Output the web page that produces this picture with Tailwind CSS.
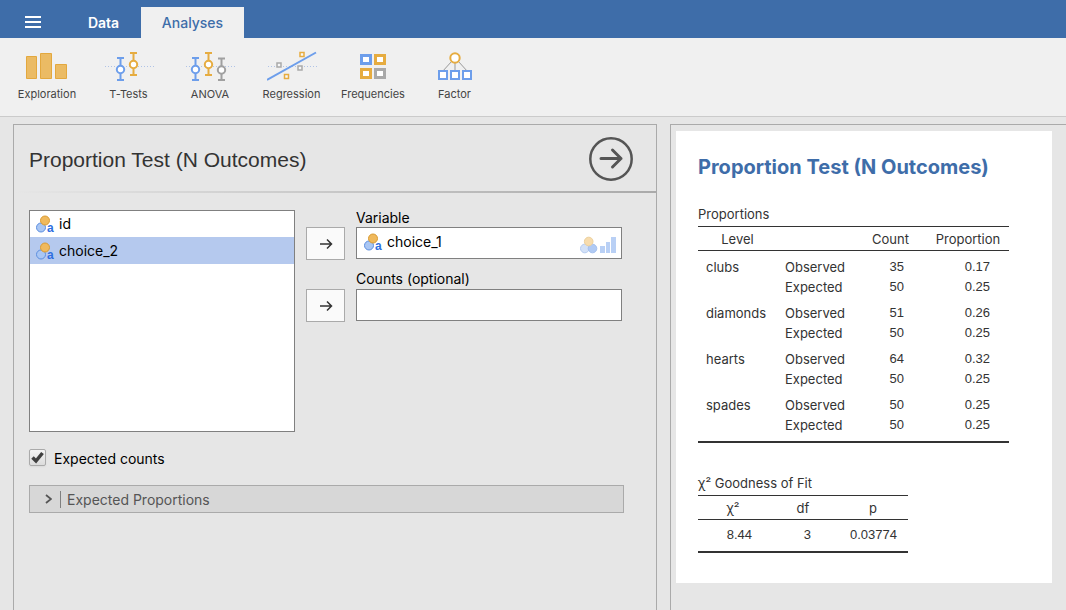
<!DOCTYPE html>
<html lang="en">
<head>
<meta charset="utf-8">
<meta name="viewport" content="width=device-width, initial-scale=1">
<title>Proportion Test (N Outcomes)</title>
<script src="https://cdn.jsdelivr.net/npm/@tailwindcss/browser@4"></script>
</head>
<body class="flex min-h-screen flex-col bg-[#e6e6e6] font-['Inter','Liberation_Sans',sans-serif] text-sm text-black">

<svg class="hidden" aria-hidden="true">
  <symbol id="nominal-text" viewBox="0 0 20 18">
    <circle cx="6" cy="12.500" r="4.500" fill="#a9c6f3" stroke="#5d8fe0"/>
    <circle cx="10" cy="5.500" r="4.500" fill="#f0b95c" stroke="#d99b33"/>
    <text x="12" y="17" font-family="Liberation Sans, sans-serif" font-size="12" font-weight="700" fill="#2f6fe0">a</text>
  </symbol>
  <symbol id="arrow" viewBox="0 0 14 12">
    <path d="M1 6h11.500M8 1.500 12.500 6 8 10.500" fill="none" stroke="#333" stroke-width="1.500"/>
  </symbol>
</svg>

<header class="flex h-[38px] items-end bg-[#3e6da9]">
  <button type="button" aria-label="Menu" class="flex h-full w-[66px] items-center justify-center pt-1.5">
    <svg class="h-3 w-4" viewBox="0 0 16 12"><path d="M0 1h16M0 6h16M0 11h16" stroke="#fff" stroke-width="2"/></svg>
  </button>
  <nav class="flex h-[31px]">
    <button type="button" class="w-[75px] font-semibold text-white">Data</button>
    <button type="button" class="w-[103px] bg-[#f0f0f0] font-medium text-[#3e6da9]">Analyses</button>
  </nav>
</header>

<div class="flex h-[79px] border-b border-[#cbcbcb] bg-[#f0f0f0] px-1.5 text-[11px] text-[#444]">
  <button type="button" class="flex w-[82px] flex-col items-center gap-[3px] pt-2.5">
    <svg class="h-9 w-[50px]" viewBox="0 0 50 36"><g fill="#ebbb64" stroke="#e3a83e"><path d="M4.500 8.500h10v22h-10zM18.500 5.500h11v25h-11zM33.500 16.500h11v14h-11z"/></g></svg>
    <span>Exploration</span>
  </button>
  <button type="button" class="flex w-[81px] flex-col items-center gap-[3px] pt-2.5">
    <svg class="h-9 w-[50px]" viewBox="0 0 50 36" fill="none" stroke-width="2"><path d="M1 18.500h49" stroke="#b0c3e6" stroke-width="1" stroke-dasharray="1 2"/><path d="M13 10h7M16.500 10v22M13 32h7" stroke="#6d9eeb"/><circle cx="16.500" cy="21.500" r="3.700" fill="#fff" stroke="#6d9eeb"/><path d="M26 5h7M29.500 5v22M26 27h7" stroke="#e6ac40"/><circle cx="29.500" cy="16.500" r="3.700" fill="#fff" stroke="#e6ac40"/></svg>
    <span>T-Tests</span>
  </button>
  <button type="button" class="flex w-[82px] flex-col items-center gap-[3px] pt-2.5">
    <svg class="h-9 w-[50px]" viewBox="0 0 50 36" fill="none" stroke-width="2"><path d="M1 18.500h49" stroke="#b0c3e6" stroke-width="1" stroke-dasharray="1 2"/><path d="M7 10h7M10.500 10v22M7 32h7" stroke="#6d9eeb"/><circle cx="10.500" cy="21.500" r="3.700" fill="#fff" stroke="#6d9eeb"/><path d="M20 5h7M23.500 5v22M20 27h7" stroke="#e6ac40"/><circle cx="23.500" cy="16.500" r="3.700" fill="#fff" stroke="#e6ac40"/><path d="M33 10.500h7M36.500 10v22M33 32h7" stroke="#a0a0a0"/><circle cx="36.500" cy="22" r="3.700" fill="#fff" stroke="#a0a0a0"/></svg>
    <span>ANOVA</span>
  </button>
  <button type="button" class="flex w-[81px] flex-col items-center gap-[3px] pt-2.5">
    <svg class="h-9 w-[50px]" viewBox="0 0 50 36" fill="none" stroke-width="1.500"><path d="M1 18.500h49" stroke="#b0c3e6" stroke-width="1" stroke-dasharray="1 2"/><path d="M0 32 49 4.500" stroke="#6d9eeb" stroke-width="2"/><g fill="#f7f7f7"><path d="M33 4.500h4v4h-4zM17.500 26.500h4v4h-4z" stroke="#e6ac40"/><path d="M10 15h4v4h-4zM31 18h4v4h-4z" stroke="#a9a9a9"/></g></svg>
    <span>Regression</span>
  </button>
  <button type="button" class="flex w-[82px] flex-col items-center gap-[3px] pt-2.5">
    <svg class="h-9 w-[50px]" viewBox="0 0 50 36" fill="#fff" stroke-width="3"><path d="M13.500 7.500h9v8h-9z" stroke="#6d9eeb"/><path d="M27.500 7.500h9v8h-9zM13.500 21.500h9v8h-9z" stroke="#e6ac40"/><path d="M27.500 21.500h9v8h-9z" stroke="#a9a9a9"/></svg>
    <span>Frequencies</span>
  </button>
  <button type="button" class="flex w-[81px] flex-col items-center gap-[3px] pt-2.5">
    <svg class="h-9 w-[50px]" viewBox="0 0 50 36" fill="#fff" stroke-width="2"><path d="M25 12v12M22 13 12 24M28 13l10 11" stroke="#999" stroke-width="1"/><circle cx="25" cy="10" r="4.700" stroke="#e6ac40"/><path d="M9 23h8v8h-8zM21 23h8v8h-8zM33 23h8v8h-8z" stroke="#6d9eeb"/></svg>
    <span>Factor</span>
  </button>
</div>

<main class="grid flex-1 grid-cols-[644fr_396fr] gap-[13px] pl-[13px] pt-[7px]">

  <section class="border border-b-0 border-[#aaa]">
    <div class="flex h-[66px] items-center justify-between pl-[15px] pr-[23px] pt-0.5">
      <h1 class="pt-0.5 font-['Liberation_Sans',Arial,sans-serif] text-[21px] text-[#333]">Proportion Test (N Outcomes)</h1>
      <button type="button" aria-label="Hide options">
        <svg class="h-11 w-11" viewBox="0 0 44 44" fill="none" stroke="#555"><circle cx="22" cy="22" r="20.700" stroke-width="2.500"/><path d="M12 21.500h20M23.500 13l8.500 8.500-8.500 8.500" stroke-width="3" stroke-linecap="round" stroke-linejoin="round"/></svg>
      </button>
    </div>
    <div class="h-0.5 bg-linear-to-r from-[#e6e6e6] to-[#aaa]"></div>

    <div class="pl-[15px] pr-8 pt-[17px]">
      <div class="grid grid-cols-[1fr_39px_1fr] gap-[11px] pr-0.5">
        <ul class="h-[222px] border border-[#808080] bg-white">
          <li class="flex h-[26px] items-center gap-1 pl-[5px]"><svg class="h-[18px] w-5"><use href="#nominal-text"/></svg>id</li>
          <li class="flex h-[27px] items-center gap-1 bg-[#b5c9ee] pl-[5px]"><svg class="h-[18px] w-5"><use href="#nominal-text"/></svg>choice_2</li>
        </ul>
        <div class="flex flex-col gap-[29px] pt-[17px]">
          <button type="button" aria-label="Move to Variable" class="flex h-[33px] items-center justify-center border border-[#aaa] bg-[#fafafa]"><svg class="h-3 w-3.5"><use href="#arrow"/></svg></button>
          <button type="button" aria-label="Move to Counts" class="flex h-[33px] items-center justify-center border border-[#aaa] bg-[#fafafa]"><svg class="h-3 w-3.5"><use href="#arrow"/></svg></button>
        </div>
        <div>
          <h2 class="h-[17px] leading-4">Variable</h2>
          <div class="flex h-8 items-center gap-1 border border-[#808080] bg-white pl-1.5 pr-[5px]">
            <svg class="mb-0.5 h-[18px] w-5"><use href="#nominal-text"/></svg>
            <span class="mb-0.5 flex-1">choice_1</span>
            <svg class="mt-1 h-[18px] w-9" viewBox="0 0 36 18"><circle cx="4.800" cy="12.500" r="4.300" fill="#d3e1f7" stroke="#b5cbf0"/><circle cx="12.500" cy="12.500" r="4.300" fill="#b0caf4" stroke="#a4c0ee"/><circle cx="8.700" cy="5.500" r="4.300" fill="#f7dcae" stroke="#ecd09c"/><path d="M20 10h5v7h-5zM26 6h4v11h-4zM31 1h5v16h-5z" fill="#b9d0f5"/></svg>
          </div>
          <label for="counts" class="block h-[30px] pt-3 leading-4">Counts (optional)</label>
          <input id="counts" type="text" class="block h-8 w-full border border-[#808080] bg-white px-2">
        </div>
      </div>

      <label class="mt-4 flex h-[19px] items-center gap-2">
        <span class="relative flex h-[17px] w-[17px]">
          <input type="checkbox" checked class="peer h-full w-full appearance-none rounded-xs border border-[#aaa] bg-linear-to-b from-[#f4f4f4] to-[#dcdcdc] shadow-xs">
          <svg class="pointer-events-none absolute inset-0 hidden peer-checked:block" viewBox="0 0 17 17"><path d="M3.500 8.500 7 12 13.500 4" fill="none" stroke="#404040" stroke-width="3.500"/></svg>
        </span>
        <span class="pt-0.5">Expected counts</span>
      </label>

      <button type="button" class="mt-[18px] flex h-7 w-full items-center border border-[#aaa] bg-[#d7d7d7] pl-[15px] text-[#555]">
        <svg class="h-2.5 w-[7px]" viewBox="0 0 7 10"><path d="M1 1l5 4-5 4" fill="none" stroke="#555" stroke-width="1.800"/></svg>
        <span class="ml-2 h-[17px] border-l border-[#808080] pl-1.5 leading-[18px]">Expected Proportions</span>
      </button>
    </div>
  </section>

  <section class="border border-b-0 border-r-0 border-[#aaa] pl-[5px] pr-3.5 pt-1.5">
    <article class="bg-white pb-[30px] pl-[22px] text-[13px] text-[#333]">
      <h2 class="pt-[22px] text-xl font-bold leading-7 text-[#3e6da9]">Proportion Test (N Outcomes)</h2>

      <table class="mt-[23px] w-[311px] table-fixed border-collapse border-b-2 border-[#333]">
        <caption class="h-[22px] text-left leading-5">Proportions</caption>
        <colgroup><col class="w-[79px]"><col class="w-[77px]"><col class="w-[73px]"><col class="w-[82px]"></colgroup>
        <thead><tr class="h-6 border-y border-[#333] *:p-0 *:font-normal *:leading-5"><th scope="col">Level</th><td></td><th scope="col">Count</th><th scope="col">Proportion</th></tr></thead>
        <tbody class="*:h-5 *:*:leading-5 *:odd:*:h-[26px] *:odd:*:pt-1.5 *:first:*:h-7 *:first:*:pt-2 *:last:*:h-[26px] *:last:*:pb-1.5">
          <tr><td class="pl-2">clubs</td><td class="pl-2">Observed</td><td class="pr-[23px] text-right font-['Liberation_Sans',sans-serif]">35</td><td class="pr-[19px] text-right font-['Liberation_Sans',sans-serif]">0.17</td></tr>
          <tr><td></td><td class="pl-2">Expected</td><td class="pr-[23px] text-right font-['Liberation_Sans',sans-serif]">50</td><td class="pr-[19px] text-right font-['Liberation_Sans',sans-serif]">0.25</td></tr>
          <tr><td class="pl-2">diamonds</td><td class="pl-2">Observed</td><td class="pr-[23px] text-right font-['Liberation_Sans',sans-serif]">51</td><td class="pr-[19px] text-right font-['Liberation_Sans',sans-serif]">0.26</td></tr>
          <tr><td></td><td class="pl-2">Expected</td><td class="pr-[23px] text-right font-['Liberation_Sans',sans-serif]">50</td><td class="pr-[19px] text-right font-['Liberation_Sans',sans-serif]">0.25</td></tr>
          <tr><td class="pl-2">hearts</td><td class="pl-2">Observed</td><td class="pr-[23px] text-right font-['Liberation_Sans',sans-serif]">64</td><td class="pr-[19px] text-right font-['Liberation_Sans',sans-serif]">0.32</td></tr>
          <tr><td></td><td class="pl-2">Expected</td><td class="pr-[23px] text-right font-['Liberation_Sans',sans-serif]">50</td><td class="pr-[19px] text-right font-['Liberation_Sans',sans-serif]">0.25</td></tr>
          <tr><td class="pl-2">spades</td><td class="pl-2">Observed</td><td class="pr-[23px] text-right font-['Liberation_Sans',sans-serif]">50</td><td class="pr-[19px] text-right font-['Liberation_Sans',sans-serif]">0.25</td></tr>
          <tr><td></td><td class="pl-2">Expected</td><td class="pr-[23px] text-right font-['Liberation_Sans',sans-serif]">50</td><td class="pr-[19px] text-right font-['Liberation_Sans',sans-serif]">0.25</td></tr>
        </tbody>
      </table>

      <table class="mt-[30px] w-[210px] table-fixed border-collapse border-b-2 border-[#333]">
        <caption class="h-[22px] text-left leading-5">χ² Goodness of Fit</caption>
        <thead><tr class="h-6 border-y border-[#333] *:p-0 *:font-normal *:leading-5"><th scope="col">χ²</th><th scope="col">df</th><th scope="col">p</th></tr></thead>
        <tbody><tr class="h-8 text-right font-['Liberation_Sans',sans-serif] leading-5"><td class="pr-4">8.44</td><td class="pr-[27px]">3</td><td class="pr-[11px]">0.03774</td></tr></tbody>
      </table>
    </article>
  </section>
</main>
</body>
</html>
